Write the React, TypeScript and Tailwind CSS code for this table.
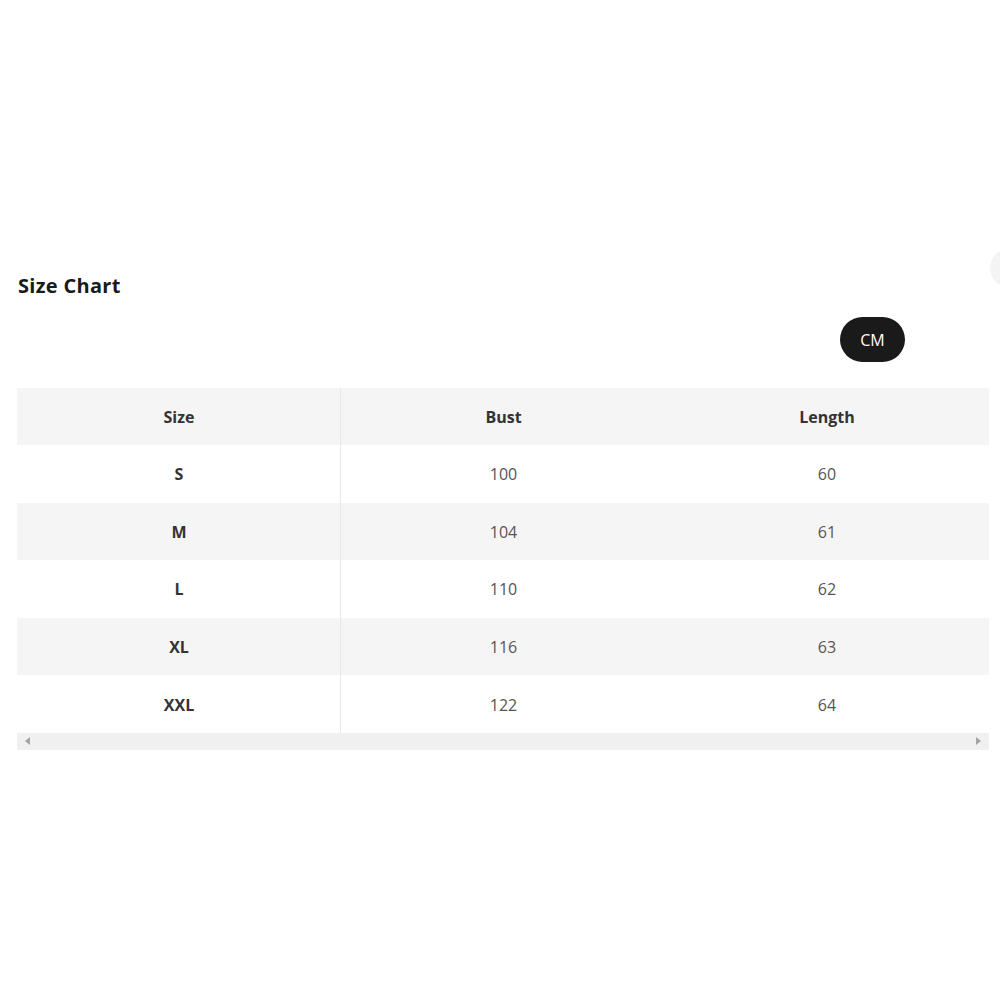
import React from "react";

const rows = [
  { size: "S", bust: "100", length: "60" },
  { size: "M", bust: "104", length: "61" },
  { size: "L", bust: "110", length: "62" },
  { size: "XL", bust: "116", length: "63" },
  { size: "XXL", bust: "122", length: "64" },
];

export default function App() {
  return (
    <div
      className="relative w-[1000px] h-[1000px] bg-white overflow-hidden"
      style={{ fontFamily: '"Open Sans", "Noto Sans", sans-serif' }}
    >
      <div className="absolute left-[990px] top-[249px] w-[38px] h-[38px] rounded-full bg-[#f4f4f4]" />
      <div className="pt-[271px] pl-[17px] w-[989px]">
        <h2 className="pl-[1px] text-[20px] leading-[30px] font-bold text-[#1a1a1a] tracking-[0.3px]">
          Size Chart
        </h2>
        <div className="flex justify-end pr-[84px] mt-[16px]">
          <div className="w-[65px] h-[45px] rounded-full bg-[#1a1a1a] text-white flex items-center justify-center text-[16px] pt-[1px]">
            CM
          </div>
        </div>
        <div className="mt-[26px]">
          <div className="grid grid-cols-3 h-[57px] bg-[#f5f5f5] text-[16px] font-bold text-[#333]">
            <div className="flex items-center justify-center border-r border-[#e8e8e8] pl-[1px]">Size</div>
            <div className="flex items-center justify-center pl-[1px]">Bust</div>
            <div className="flex items-center justify-center">Length</div>
          </div>
          {rows.map((r, i) => (
            <div
              key={r.size}
              className={
                "grid grid-cols-3 h-[57.6px] text-[16px] " +
                (i % 2 === 1 ? "bg-[#f5f5f5]" : "bg-white")
              }
            >
              <div className="flex items-center justify-center border-r border-[#e8e8e8] font-bold text-[#333] pl-[1px] pt-[1px]">
                {r.size}
              </div>
              <div className="flex items-center justify-center text-[#555] pl-[1px] pt-[1px]">{r.bust}</div>
              <div className="flex items-center justify-center text-[#555] pt-[1px]">{r.length}</div>
            </div>
          ))}
          <div className="h-[17px] bg-[#f0f0f0] flex items-center justify-between px-[8px]">
            <svg width="5" height="8" viewBox="0 0 5 8">
              <polygon points="5,0 0,4 5,8" fill="#a3a3a3" />
            </svg>
            <svg width="5" height="8" viewBox="0 0 5 8">
              <polygon points="0,0 5,4 0,8" fill="#a3a3a3" />
            </svg>
          </div>
        </div>
      </div>
    </div>
  );
}
